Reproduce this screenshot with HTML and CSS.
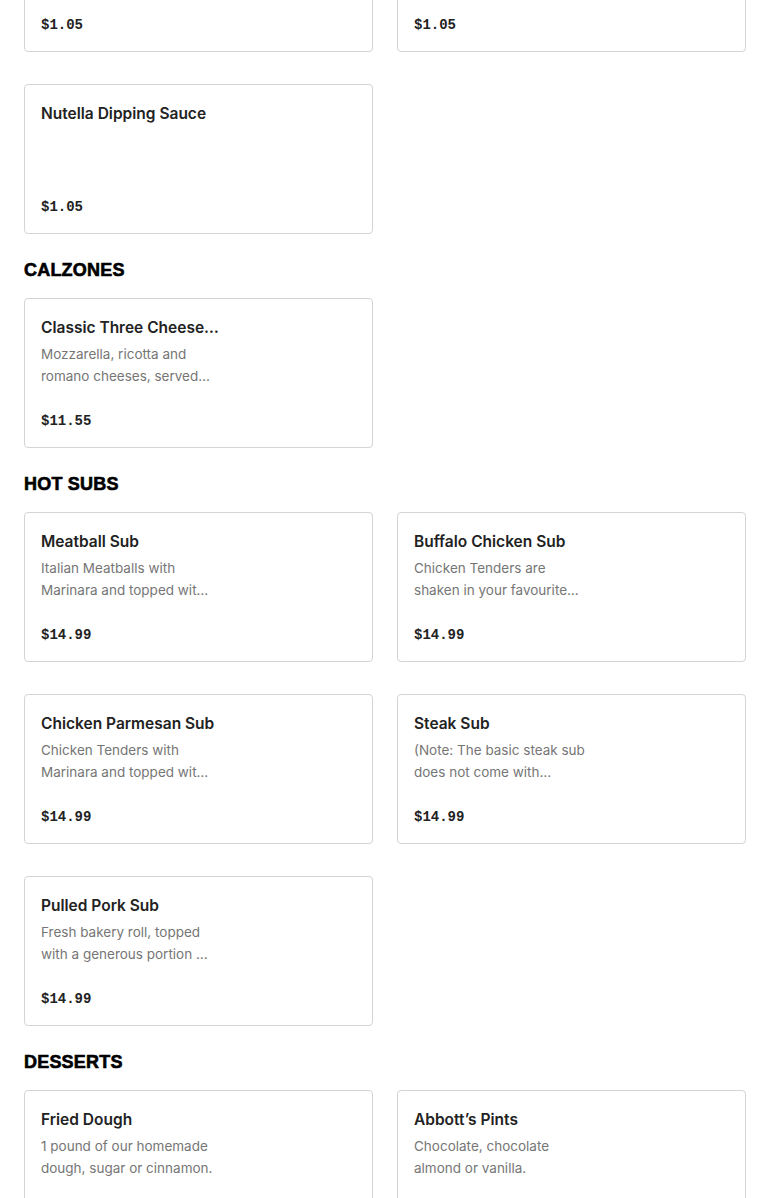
FILE: index.html
```html
<!DOCTYPE html>
<html>
<head>
<meta charset="utf-8">
<link rel="stylesheet" href="styles.css">
</head>
<body>
<main class="menu">
  <section class="section section-scrolled">
    <div class="grid">
      <div class="card"><div class="info"><div class="title">Garlic Dipping Sauce</div></div><div class="price">$1.05</div></div>
      <div class="card"><div class="info"><div class="title">Ranch Dipping Sauce</div></div><div class="price">$1.05</div></div>
      <div class="card"><div class="info"><div class="title">Nutella Dipping Sauce</div></div><div class="price">$1.05</div></div>
    </div>
  </section>

  <section class="section">
    <h2 class="heading">CALZONES</h2>
    <div class="grid">
      <div class="card"><div class="info"><div class="title">Classic Three Cheese Calzone</div><div class="desc">Mozzarella, ricotta and romano cheeses, served with marinara.</div></div><div class="price">$11.55</div></div>
    </div>
  </section>

  <section class="section">
    <h2 class="heading">HOT SUBS</h2>
    <div class="grid">
      <div class="card"><div class="info"><div class="title">Meatball Sub</div><div class="desc">Italian Meatballs with Marinara and topped with mozzarella cheese.</div></div><div class="price">$14.99</div></div>
      <div class="card"><div class="info"><div class="title">Buffalo Chicken Sub</div><div class="desc">Chicken Tenders are shaken in your favourite sauce.</div></div><div class="price">$14.99</div></div>
      <div class="card"><div class="info"><div class="title">Chicken Parmesan Sub</div><div class="desc">Chicken Tenders with Marinara and topped with mozzarella cheese.</div></div><div class="price">$14.99</div></div>
      <div class="card"><div class="info"><div class="title">Steak Sub</div><div class="desc">(Note: The basic steak sub does not come with cheese.)</div></div><div class="price">$14.99</div></div>
      <div class="card"><div class="info"><div class="title">Pulled Pork Sub</div><div class="desc">Fresh bakery roll, topped with a generous portion of pulled pork.</div></div><div class="price">$14.99</div></div>
    </div>
  </section>

  <section class="section">
    <h2 class="heading">DESSERTS</h2>
    <div class="grid">
      <div class="card"><div class="info"><div class="title">Fried Dough</div><div class="desc">1 pound of our homemade dough, sugar or cinnamon.</div></div><div class="price">$7.99</div></div>
      <div class="card"><div class="info"><div class="title">Abbott’s Pints</div><div class="desc">Chocolate, chocolate almond or vanilla.</div></div><div class="price">$8.99</div></div>
    </div>
  </section>
</main>
</body>
</html>
```

FILE: styles.css
```css
* { box-sizing: border-box; }
html, body { margin: 0; padding: 0; background: #fff; }
body { font-family: "Inter", "Liberation Sans", sans-serif; color: #222; }

.menu { padding: 0 24px; }
.section-scrolled { margin-top: -98px; }

.heading {
  margin: 24px 0 16px;
  font-family: "Liberation Sans", Arial, sans-serif;
  font-weight: 700;
  font-size: 18px;
  line-height: 24px;
  color: #000;
  letter-spacing: 0.2px;
  -webkit-text-stroke: 0.6px #000;
}

.grid {
  display: grid;
  grid-template-columns: 349px 349px;
  column-gap: 24px;
  row-gap: 32px;
}

.card {
  height: 150px;
  border: 1px solid #d4d4d4;
  border-radius: 4px;
  padding: 17px 16px 15px;
  display: flex;
  flex-direction: column;
  justify-content: space-between;
  background: #fff;
}

.info { width: 178px; }

.title {
  font-size: 15.5px;
  font-weight: 600;
  line-height: 24px;
  color: #222;
  white-space: nowrap;
  overflow: hidden;
  text-overflow: ellipsis;
}

.desc {
  width: 173px;
  margin-top: 3px;
  font-size: 13.5px;
  line-height: 22px;
  color: #767676;
  display: -webkit-box;
  -webkit-line-clamp: 2;
  -webkit-box-orient: vertical;
  overflow: hidden;
}

.price {
  font-family: "Liberation Mono", "DejaVu Sans Mono", monospace;
  font-weight: 700;
  font-size: 14px;
  line-height: 22px;
  color: #222;
}
```
